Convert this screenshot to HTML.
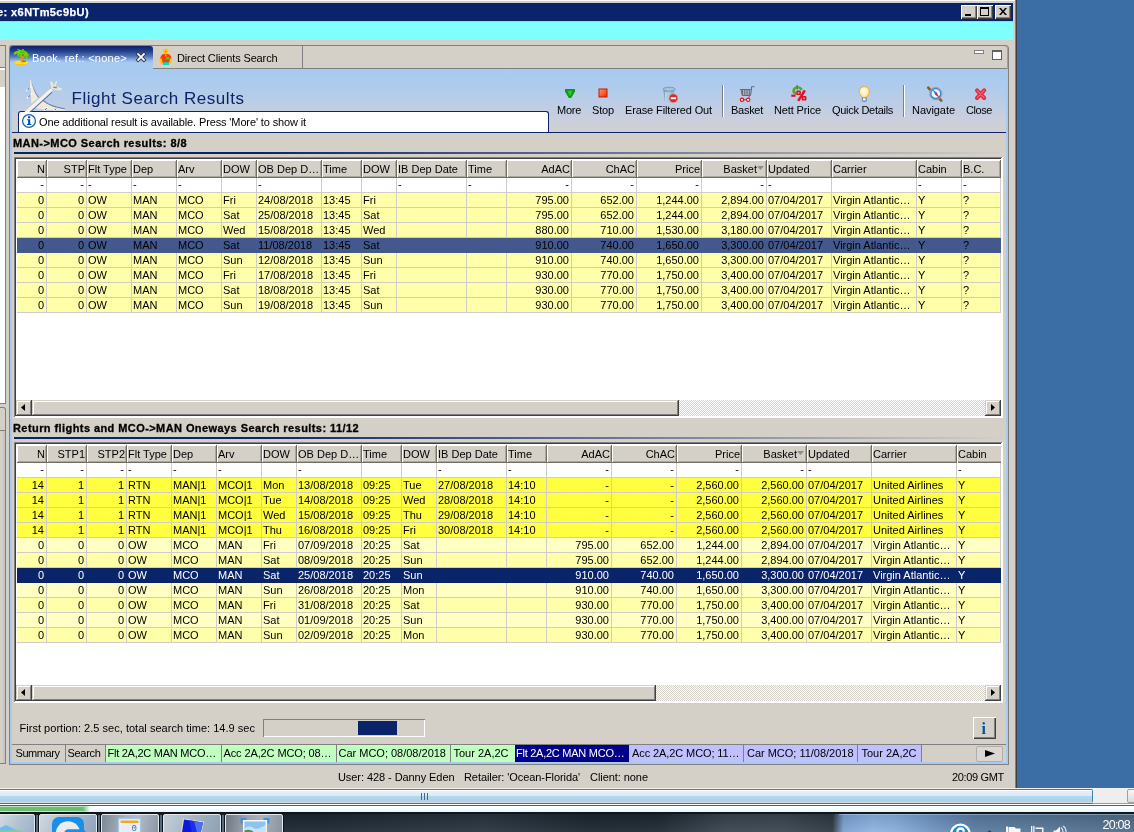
<!DOCTYPE html>
<html><head><meta charset="utf-8"><title>Flight Search Results</title><style>
html,body{margin:0;padding:0}
body{width:1134px;height:832px;overflow:hidden;position:relative;background:#d4d0c8;font-family:"Liberation Sans",sans-serif;font-size:11px;line-height:11px;color:#000}
body{will-change:transform}
body div,body span,body svg{position:absolute;box-sizing:border-box}
.t{white-space:pre}
.up{background:#d4d0c8;box-shadow:inset 1px 1px 0 #fff,inset -1px -1px 0 #404040,inset -2px -2px 0 #808080}
.sb{background:#d4d0c8;box-shadow:inset -1px -1px 0 #404040,inset 1px 1px 0 #d4d0c8,inset -2px -2px 0 #808080,inset 2px 2px 0 #fff}
.hd{background:#d4d0c8;box-shadow:inset -1px -1px 0 #716f64,inset 1px 1px 0 #fff,inset -2px -2px 0 #aca899;line-height:19px;padding:0 2px 0 1px;white-space:pre;overflow:hidden}
.row{left:17px;width:984px;height:14px;line-height:14px}
.row span{top:0;height:14px;padding:0 2px 0 1px;white-space:pre;overflow:hidden}
.r{text-align:right}
.trk{background-color:#fff;background-image:linear-gradient(45deg,#d4d0c8 25%,transparent 25%,transparent 75%,#d4d0c8 75%),linear-gradient(45deg,#d4d0c8 25%,transparent 25%,transparent 75%,#d4d0c8 75%);background-size:2px 2px;background-position:0 0,1px 1px}
</style></head><body>
<div style="left:1017px;top:0px;width:117px;height:788px;background:#3a6ea5;"></div>
<div style="left:0px;top:0px;width:1015px;height:1px;background:#fff;"></div>
<div style="left:1015px;top:0px;width:1px;height:788px;background:#808080;"></div>
<div style="left:1016px;top:0px;width:1px;height:788px;background:#404040;"></div>
<div style="left:0px;top:3px;width:1013px;height:18px;background:#0a246a;"></div>
<span class="t" style="left:-3px;top:6.69px;font-weight:bold;color:#fff;letter-spacing:0.414px;-webkit-text-stroke:.25px #fff;">e: x6NTm5c9bU)</span>
<div class="up" style="left:961px;top:5px;width:16px;height:14px;"></div>
<div class="up" style="left:977px;top:5px;width:16px;height:14px;"></div>
<div class="up" style="left:995px;top:5px;width:16px;height:14px;"></div>
<div style="left:965px;top:14px;width:6px;height:2px;background:#000;"></div>
<div style="left:980px;top:7px;width:9px;height:9px;border:1px solid #000;border-top:2px solid #000;"></div>
<svg style="left:999px;top:8px" width="8" height="7" viewBox="0 0 8 7"><path d="M0 0h2l2 2.5L6 0h2L5 3.5 8 7H6L4 4.5 2 7H0l3-3.5z" fill="#000"/></svg>
<div style="left:0px;top:21px;width:1013px;height:1px;background:#c8c4bc;"></div>
<div style="left:0px;top:22px;width:1013px;height:18px;background:#80ffff;"></div>
<div style="left:0px;top:45px;width:6px;height:359px;background:#808080;"></div>
<div style="left:0px;top:46px;width:5px;height:21px;background:#d4d0c8;"></div>
<div style="left:0px;top:68px;width:5px;height:2px;background:#fff;"></div>
<div style="left:0px;top:70px;width:5px;height:17px;background:#d4d0c8;"></div>
<div style="left:0px;top:87px;width:5px;height:316px;background:#fff;"></div>
<div style="left:0px;top:407px;width:6px;height:357px;background:#808080;border-top-right-radius:3px;"></div>
<div style="left:0px;top:408px;width:5px;height:355px;background:#d4d0c8;border-top-right-radius:2px;"></div>
<div style="left:0px;top:430px;width:5px;height:1px;background:#808080;"></div>
<div style="left:3px;top:431px;width:2px;height:332px;background:#c6c2c6;"></div>
<div style="left:9px;top:45px;width:1000px;height:720px;background:#808080;border-radius:3px 4px 0 0;"></div>
<div style="left:10px;top:46px;width:998px;height:718px;background:#a6caf0;border-radius:3px 3px 0 0;"></div>
<div style="left:12px;top:69px;width:994px;height:693px;background:#d4d0c8;"></div>
<div style="left:153px;top:45px;width:855px;height:24px;background:#d4d0c8;border-top:1px solid #808080;border-right:1px solid #a0a0a0;border-top-right-radius:4px;"></div>
<div style="left:10px;top:46px;width:143px;height:23px;background:linear-gradient(#0a246a 0%,#1f3b85 20%,#5273b8 45%,#8fb3e4 62%,#a6caf0 72%);border-top-left-radius:3px;border-top-right-radius:3px;"></div>
<span class="t" style="left:32px;top:52.69px;color:#fff;letter-spacing:0.249px;">Book. ref.: &lt;none&gt;</span>
<div style="left:153px;top:45px;width:150px;height:24px;background:#d4d0c8;border:1px solid #808080;border-left:none;"></div>
<span class="t" style="left:177px;top:52.69px;letter-spacing:-0.135px;">Direct Clients Search</span>
<div style="left:974px;top:50px;width:10px;height:4px;background:#fff;border:1px solid #808080;"></div>
<div style="left:992px;top:50px;width:10px;height:10px;background:#fff;border:1px solid #606060;border-top:2px solid #606060;"></div>
<div style="left:12px;top:69px;width:994px;height:63px;background:linear-gradient(#a6caf0 0%,#adcbee 25%,#bccde6 55%,#cacfdc 80%,#d2d0d0 100%);"></div>
<div style="left:12px;top:132px;width:994px;height:1px;background:#0a246a;"></div>
<div style="left:303px;top:68px;width:704px;height:1px;background:#808080;"></div>
<span class="t" style="left:71.5px;top:89.61px;font-size:17px;line-height:17px;color:#0a246a;letter-spacing:0.544px;">Flight Search Results</span>
<div style="left:18px;top:111px;width:531px;height:21px;background:#fff;border:1px solid #0a246a;border-bottom:none;border-top-left-radius:3px;border-top-right-radius:3px;"></div>
<span class="t" style="left:39px;top:116.69px;letter-spacing:-0.126px;">One additional result is available. Press 'More' to show it</span>
<span class="t" style="left:557px;top:104.69px;letter-spacing:-0.266px;">More</span>
<span class="t" style="left:592px;top:104.69px;letter-spacing:-0.160px;">Stop</span>
<span class="t" style="left:625px;top:104.69px;letter-spacing:-0.126px;">Erase Filtered Out</span>
<span class="t" style="left:731px;top:104.69px;letter-spacing:-0.273px;">Basket</span>
<span class="t" style="left:774px;top:104.69px;letter-spacing:-0.130px;">Nett Price</span>
<span class="t" style="left:832px;top:104.69px;letter-spacing:-0.292px;">Quick Details</span>
<span class="t" style="left:912px;top:104.69px;letter-spacing:-0.053px;">Navigate</span>
<span class="t" style="left:966px;top:104.69px;letter-spacing:-0.425px;">Close</span>
<div style="left:722px;top:85px;width:1px;height:32px;background:#808080;"></div>
<div style="left:723px;top:85px;width:1px;height:32px;background:#fff;"></div>
<div style="left:903px;top:85px;width:1px;height:32px;background:#808080;"></div>
<div style="left:904px;top:85px;width:1px;height:32px;background:#fff;"></div>
<span class="t" style="left:13px;top:138.19px;font-weight:bold;letter-spacing:0.440px;-webkit-text-stroke:.3px #000;">MAN-&gt;MCO Search results: 8/8</span>
<div style="left:14px;top:152px;width:990px;height:2px;background:linear-gradient(90deg,#0a246a 0%,#0a246a 25%,#d4d0c8 100%);"></div>
<span class="t" style="left:13px;top:423.19px;font-weight:bold;letter-spacing:0.424px;-webkit-text-stroke:.3px #000;">Return flights and MCO-&gt;MAN Oneways Search results: 11/12</span>
<div style="left:14px;top:437px;width:990px;height:2px;background:linear-gradient(90deg,#0a246a 0%,#0a246a 25%,#d4d0c8 100%);"></div>
<div style="left:14px;top:157px;width:989px;height:261px;background:#fff;box-shadow:inset -1px -1px 0 #fff,inset 1px 1px 0 #808080,inset -2px -2px 0 #fff,inset 2px 2px 0 #404040;"></div>
<div class="hd r" style="left:17px;top:160px;width:30px;height:18px">N</div>
<div class="hd r" style="left:47px;top:160px;width:40px;height:18px">STP</div>
<div class="hd" style="left:87px;top:160px;width:45px;height:18px">Flt Type</div>
<div class="hd" style="left:132px;top:160px;width:45px;height:18px">Dep</div>
<div class="hd" style="left:177px;top:160px;width:45px;height:18px">Arv</div>
<div class="hd" style="left:222px;top:160px;width:35px;height:18px">DOW</div>
<div class="hd" style="left:257px;top:160px;width:65px;height:18px">OB Dep D…</div>
<div class="hd" style="left:322px;top:160px;width:40px;height:18px">Time</div>
<div class="hd" style="left:362px;top:160px;width:35px;height:18px">DOW</div>
<div class="hd" style="left:397px;top:160px;width:70px;height:18px">IB Dep Date</div>
<div class="hd" style="left:467px;top:160px;width:40px;height:18px">Time</div>
<div class="hd r" style="left:507px;top:160px;width:65px;height:18px">AdAC</div>
<div class="hd r" style="left:572px;top:160px;width:65px;height:18px">ChAC</div>
<div class="hd r" style="left:637px;top:160px;width:65px;height:18px">Price</div>
<div class="hd r" style="left:702px;top:160px;width:65px;height:18px;padding-right:10px">Basket</div>
<div class="hd" style="left:767px;top:160px;width:65px;height:18px">Updated</div>
<div class="hd" style="left:832px;top:160px;width:85px;height:18px">Carrier</div>
<div class="hd" style="left:917px;top:160px;width:45px;height:18px">Cabin</div>
<div class="hd" style="left:962px;top:160px;width:39px;height:18px">B.C.</div>
<div class="row" style="top:177px;"><span class="r" style="left:0px;width:29px">-</span><span class="r" style="left:30px;width:39px">-</span><span style="left:70px;width:44px">-</span><span style="left:115px;width:44px">-</span><span style="left:160px;width:44px">-</span><span style="left:240px;width:64px">-</span><span style="left:380px;width:69px">-</span><span style="left:450px;width:39px">-</span><span class="r" style="left:490px;width:64px">-</span><span class="r" style="left:555px;width:64px">-</span><span class="r" style="left:620px;width:64px">-</span><span class="r" style="left:685px;width:64px">-</span><span style="left:750px;width:64px">-</span><span style="left:900px;width:44px">-</span><span style="left:945px;width:38px">-</span></div>
<div class="row" style="top:193px;background:#ffffaa;"><span class="r" style="left:0px;width:29px">0</span><span class="r" style="left:30px;width:39px">0</span><span style="left:70px;width:44px">OW</span><span style="left:115px;width:44px">MAN</span><span style="left:160px;width:44px">MCO</span><span style="left:205px;width:34px">Fri</span><span style="left:240px;width:64px">24/08/2018</span><span style="left:305px;width:39px">13:45</span><span style="left:345px;width:34px">Fri</span><span class="r" style="left:490px;width:64px">795.00</span><span class="r" style="left:555px;width:64px">652.00</span><span class="r" style="left:620px;width:64px">1,244.00</span><span class="r" style="left:685px;width:64px">2,894.00</span><span style="left:750px;width:64px">07/04/2017</span><span style="left:815px;width:84px">Virgin Atlantic…</span><span style="left:900px;width:44px">Y</span><span style="left:945px;width:38px">?</span></div>
<div class="row" style="top:208px;background:#ffffaa;"><span class="r" style="left:0px;width:29px">0</span><span class="r" style="left:30px;width:39px">0</span><span style="left:70px;width:44px">OW</span><span style="left:115px;width:44px">MAN</span><span style="left:160px;width:44px">MCO</span><span style="left:205px;width:34px">Sat</span><span style="left:240px;width:64px">25/08/2018</span><span style="left:305px;width:39px">13:45</span><span style="left:345px;width:34px">Sat</span><span class="r" style="left:490px;width:64px">795.00</span><span class="r" style="left:555px;width:64px">652.00</span><span class="r" style="left:620px;width:64px">1,244.00</span><span class="r" style="left:685px;width:64px">2,894.00</span><span style="left:750px;width:64px">07/04/2017</span><span style="left:815px;width:84px">Virgin Atlantic…</span><span style="left:900px;width:44px">Y</span><span style="left:945px;width:38px">?</span></div>
<div class="row" style="top:223px;background:#ffffaa;"><span class="r" style="left:0px;width:29px">0</span><span class="r" style="left:30px;width:39px">0</span><span style="left:70px;width:44px">OW</span><span style="left:115px;width:44px">MAN</span><span style="left:160px;width:44px">MCO</span><span style="left:205px;width:34px">Wed</span><span style="left:240px;width:64px">15/08/2018</span><span style="left:305px;width:39px">13:45</span><span style="left:345px;width:34px">Wed</span><span class="r" style="left:490px;width:64px">880.00</span><span class="r" style="left:555px;width:64px">710.00</span><span class="r" style="left:620px;width:64px">1,530.00</span><span class="r" style="left:685px;width:64px">3,180.00</span><span style="left:750px;width:64px">07/04/2017</span><span style="left:815px;width:84px">Virgin Atlantic…</span><span style="left:900px;width:44px">Y</span><span style="left:945px;width:38px">?</span></div>
<div class="row" style="top:238px;background:#43598d;height:15px;"><span class="r" style="left:0px;width:29px">0</span><span class="r" style="left:30px;width:39px">0</span><span style="left:70px;width:44px">OW</span><span style="left:115px;width:44px">MAN</span><span style="left:160px;width:44px">MCO</span><span style="left:205px;width:34px">Sat</span><span style="left:240px;width:64px">11/08/2018</span><span style="left:305px;width:39px">13:45</span><span style="left:345px;width:34px">Sat</span><span class="r" style="left:490px;width:64px">910.00</span><span class="r" style="left:555px;width:64px">740.00</span><span class="r" style="left:620px;width:64px">1,650.00</span><span class="r" style="left:685px;width:64px">3,300.00</span><span style="left:750px;width:64px">07/04/2017</span><span style="left:815px;width:84px">Virgin Atlantic…</span><span style="left:900px;width:44px">Y</span><span style="left:945px;width:38px">?</span></div>
<div class="row" style="top:253px;background:#ffffaa;"><span class="r" style="left:0px;width:29px">0</span><span class="r" style="left:30px;width:39px">0</span><span style="left:70px;width:44px">OW</span><span style="left:115px;width:44px">MAN</span><span style="left:160px;width:44px">MCO</span><span style="left:205px;width:34px">Sun</span><span style="left:240px;width:64px">12/08/2018</span><span style="left:305px;width:39px">13:45</span><span style="left:345px;width:34px">Sun</span><span class="r" style="left:490px;width:64px">910.00</span><span class="r" style="left:555px;width:64px">740.00</span><span class="r" style="left:620px;width:64px">1,650.00</span><span class="r" style="left:685px;width:64px">3,300.00</span><span style="left:750px;width:64px">07/04/2017</span><span style="left:815px;width:84px">Virgin Atlantic…</span><span style="left:900px;width:44px">Y</span><span style="left:945px;width:38px">?</span></div>
<div class="row" style="top:268px;background:#ffffaa;"><span class="r" style="left:0px;width:29px">0</span><span class="r" style="left:30px;width:39px">0</span><span style="left:70px;width:44px">OW</span><span style="left:115px;width:44px">MAN</span><span style="left:160px;width:44px">MCO</span><span style="left:205px;width:34px">Fri</span><span style="left:240px;width:64px">17/08/2018</span><span style="left:305px;width:39px">13:45</span><span style="left:345px;width:34px">Fri</span><span class="r" style="left:490px;width:64px">930.00</span><span class="r" style="left:555px;width:64px">770.00</span><span class="r" style="left:620px;width:64px">1,750.00</span><span class="r" style="left:685px;width:64px">3,400.00</span><span style="left:750px;width:64px">07/04/2017</span><span style="left:815px;width:84px">Virgin Atlantic…</span><span style="left:900px;width:44px">Y</span><span style="left:945px;width:38px">?</span></div>
<div class="row" style="top:283px;background:#ffffaa;"><span class="r" style="left:0px;width:29px">0</span><span class="r" style="left:30px;width:39px">0</span><span style="left:70px;width:44px">OW</span><span style="left:115px;width:44px">MAN</span><span style="left:160px;width:44px">MCO</span><span style="left:205px;width:34px">Sat</span><span style="left:240px;width:64px">18/08/2018</span><span style="left:305px;width:39px">13:45</span><span style="left:345px;width:34px">Sat</span><span class="r" style="left:490px;width:64px">930.00</span><span class="r" style="left:555px;width:64px">770.00</span><span class="r" style="left:620px;width:64px">1,750.00</span><span class="r" style="left:685px;width:64px">3,400.00</span><span style="left:750px;width:64px">07/04/2017</span><span style="left:815px;width:84px">Virgin Atlantic…</span><span style="left:900px;width:44px">Y</span><span style="left:945px;width:38px">?</span></div>
<div class="row" style="top:298px;background:#ffffaa;"><span class="r" style="left:0px;width:29px">0</span><span class="r" style="left:30px;width:39px">0</span><span style="left:70px;width:44px">OW</span><span style="left:115px;width:44px">MAN</span><span style="left:160px;width:44px">MCO</span><span style="left:205px;width:34px">Sun</span><span style="left:240px;width:64px">19/08/2018</span><span style="left:305px;width:39px">13:45</span><span style="left:345px;width:34px">Sun</span><span class="r" style="left:490px;width:64px">930.00</span><span class="r" style="left:555px;width:64px">770.00</span><span class="r" style="left:620px;width:64px">1,750.00</span><span class="r" style="left:685px;width:64px">3,400.00</span><span style="left:750px;width:64px">07/04/2017</span><span style="left:815px;width:84px">Virgin Atlantic…</span><span style="left:900px;width:44px">Y</span><span style="left:945px;width:38px">?</span></div>
<div style="left:17px;top:192px;width:984px;height:1px;background:#d0ccc8;"></div>
<div style="left:17px;top:207px;width:984px;height:1px;background:#d0ccc8;"></div>
<div style="left:17px;top:222px;width:984px;height:1px;background:#d0ccc8;"></div>
<div style="left:17px;top:237px;width:984px;height:1px;background:#d0ccc8;"></div>
<div style="left:17px;top:267px;width:984px;height:1px;background:#d0ccc8;"></div>
<div style="left:17px;top:282px;width:984px;height:1px;background:#d0ccc8;"></div>
<div style="left:17px;top:297px;width:984px;height:1px;background:#d0ccc8;"></div>
<div style="left:17px;top:312px;width:984px;height:1px;background:#d0ccc8;"></div>
<div style="left:46px;top:178px;width:1px;height:60px;background:#d0ccc8;"></div>
<div style="left:46px;top:253px;width:1px;height:60px;background:#d0ccc8;"></div>
<div style="left:86px;top:178px;width:1px;height:60px;background:#d0ccc8;"></div>
<div style="left:86px;top:253px;width:1px;height:60px;background:#d0ccc8;"></div>
<div style="left:131px;top:178px;width:1px;height:60px;background:#d0ccc8;"></div>
<div style="left:131px;top:253px;width:1px;height:60px;background:#d0ccc8;"></div>
<div style="left:176px;top:178px;width:1px;height:60px;background:#d0ccc8;"></div>
<div style="left:176px;top:253px;width:1px;height:60px;background:#d0ccc8;"></div>
<div style="left:221px;top:178px;width:1px;height:60px;background:#d0ccc8;"></div>
<div style="left:221px;top:253px;width:1px;height:60px;background:#d0ccc8;"></div>
<div style="left:256px;top:178px;width:1px;height:60px;background:#d0ccc8;"></div>
<div style="left:256px;top:253px;width:1px;height:60px;background:#d0ccc8;"></div>
<div style="left:321px;top:178px;width:1px;height:60px;background:#d0ccc8;"></div>
<div style="left:321px;top:253px;width:1px;height:60px;background:#d0ccc8;"></div>
<div style="left:361px;top:178px;width:1px;height:60px;background:#d0ccc8;"></div>
<div style="left:361px;top:253px;width:1px;height:60px;background:#d0ccc8;"></div>
<div style="left:396px;top:178px;width:1px;height:60px;background:#d0ccc8;"></div>
<div style="left:396px;top:253px;width:1px;height:60px;background:#d0ccc8;"></div>
<div style="left:466px;top:178px;width:1px;height:60px;background:#d0ccc8;"></div>
<div style="left:466px;top:253px;width:1px;height:60px;background:#d0ccc8;"></div>
<div style="left:506px;top:178px;width:1px;height:60px;background:#d0ccc8;"></div>
<div style="left:506px;top:253px;width:1px;height:60px;background:#d0ccc8;"></div>
<div style="left:571px;top:178px;width:1px;height:60px;background:#d0ccc8;"></div>
<div style="left:571px;top:253px;width:1px;height:60px;background:#d0ccc8;"></div>
<div style="left:636px;top:178px;width:1px;height:60px;background:#d0ccc8;"></div>
<div style="left:636px;top:253px;width:1px;height:60px;background:#d0ccc8;"></div>
<div style="left:701px;top:178px;width:1px;height:60px;background:#d0ccc8;"></div>
<div style="left:701px;top:253px;width:1px;height:60px;background:#d0ccc8;"></div>
<div style="left:766px;top:178px;width:1px;height:60px;background:#d0ccc8;"></div>
<div style="left:766px;top:253px;width:1px;height:60px;background:#d0ccc8;"></div>
<div style="left:831px;top:178px;width:1px;height:60px;background:#d0ccc8;"></div>
<div style="left:831px;top:253px;width:1px;height:60px;background:#d0ccc8;"></div>
<div style="left:916px;top:178px;width:1px;height:60px;background:#d0ccc8;"></div>
<div style="left:916px;top:253px;width:1px;height:60px;background:#d0ccc8;"></div>
<div style="left:961px;top:178px;width:1px;height:60px;background:#d0ccc8;"></div>
<div style="left:961px;top:253px;width:1px;height:60px;background:#d0ccc8;"></div>
<div style="left:1000px;top:178px;width:1px;height:60px;background:#d0ccc8;"></div>
<div style="left:1000px;top:253px;width:1px;height:60px;background:#d0ccc8;"></div>
<div class="trk" style="left:16px;top:400px;width:985px;height:16px;"></div>
<div class="sb" style="left:16px;top:400px;width:16px;height:16px;"></div>
<div class="sb" style="left:985px;top:400px;width:16px;height:16px;"></div>
<div class="sb" style="left:32px;top:400px;width:647px;height:16px;"></div>
<svg style="left:21px;top:404px" width="4" height="7"><path d="M4 0v7L0 3.500z" fill="#000"/></svg>
<svg style="left:991px;top:404px" width="4" height="7"><path d="M0 0v7l4-3.500z" fill="#000"/></svg>
<div style="left:14px;top:442px;width:989px;height:261px;background:#fff;box-shadow:inset -1px -1px 0 #fff,inset 1px 1px 0 #808080,inset -2px -2px 0 #fff,inset 2px 2px 0 #404040;"></div>
<div class="hd r" style="left:17px;top:445px;width:30px;height:18px">N</div>
<div class="hd r" style="left:47px;top:445px;width:40px;height:18px">STP1</div>
<div class="hd r" style="left:87px;top:445px;width:40px;height:18px">STP2</div>
<div class="hd" style="left:127px;top:445px;width:45px;height:18px">Flt Type</div>
<div class="hd" style="left:172px;top:445px;width:45px;height:18px">Dep</div>
<div class="hd" style="left:217px;top:445px;width:45px;height:18px">Arv</div>
<div class="hd" style="left:262px;top:445px;width:35px;height:18px">DOW</div>
<div class="hd" style="left:297px;top:445px;width:65px;height:18px">OB Dep D…</div>
<div class="hd" style="left:362px;top:445px;width:40px;height:18px">Time</div>
<div class="hd" style="left:402px;top:445px;width:35px;height:18px">DOW</div>
<div class="hd" style="left:437px;top:445px;width:70px;height:18px">IB Dep Date</div>
<div class="hd" style="left:507px;top:445px;width:40px;height:18px">Time</div>
<div class="hd r" style="left:547px;top:445px;width:65px;height:18px">AdAC</div>
<div class="hd r" style="left:612px;top:445px;width:65px;height:18px">ChAC</div>
<div class="hd r" style="left:677px;top:445px;width:65px;height:18px">Price</div>
<div class="hd r" style="left:742px;top:445px;width:65px;height:18px;padding-right:10px">Basket</div>
<div class="hd" style="left:807px;top:445px;width:65px;height:18px">Updated</div>
<div class="hd" style="left:872px;top:445px;width:85px;height:18px">Carrier</div>
<div class="hd" style="left:957px;top:445px;width:44px;height:18px;box-shadow:inset 1px 1px 0 #fff,inset 0 -1px 0 #716f64,inset 0 -2px 0 #aca899">Cabin</div>
<div class="row" style="top:462px;"><span class="r" style="left:0px;width:29px">-</span><span class="r" style="left:30px;width:39px">-</span><span class="r" style="left:70px;width:39px">-</span><span style="left:110px;width:44px">-</span><span style="left:155px;width:44px">-</span><span style="left:200px;width:44px">-</span><span style="left:280px;width:64px">-</span><span style="left:420px;width:69px">-</span><span style="left:490px;width:39px">-</span><span class="r" style="left:530px;width:64px">-</span><span class="r" style="left:595px;width:64px">-</span><span class="r" style="left:660px;width:64px">-</span><span class="r" style="left:725px;width:64px">-</span><span style="left:790px;width:64px">-</span><span style="left:940px;width:43px">-</span></div>
<div class="row" style="top:478px;background:#ffff40;"><span class="r" style="left:0px;width:29px">14</span><span class="r" style="left:30px;width:39px">1</span><span class="r" style="left:70px;width:39px">1</span><span style="left:110px;width:44px">RTN</span><span style="left:155px;width:44px">MAN|1</span><span style="left:200px;width:44px">MCO|1</span><span style="left:245px;width:34px">Mon</span><span style="left:280px;width:64px">13/08/2018</span><span style="left:345px;width:39px">09:25</span><span style="left:385px;width:34px">Tue</span><span style="left:420px;width:69px">27/08/2018</span><span style="left:490px;width:39px">14:10</span><span class="r" style="left:530px;width:64px">-</span><span class="r" style="left:595px;width:64px">-</span><span class="r" style="left:660px;width:64px">2,560.00</span><span class="r" style="left:725px;width:64px">2,560.00</span><span style="left:790px;width:64px">07/04/2017</span><span style="left:855px;width:84px">United Airlines</span><span style="left:940px;width:43px">Y</span></div>
<div class="row" style="top:493px;background:#ffff40;"><span class="r" style="left:0px;width:29px">14</span><span class="r" style="left:30px;width:39px">1</span><span class="r" style="left:70px;width:39px">1</span><span style="left:110px;width:44px">RTN</span><span style="left:155px;width:44px">MAN|1</span><span style="left:200px;width:44px">MCO|1</span><span style="left:245px;width:34px">Tue</span><span style="left:280px;width:64px">14/08/2018</span><span style="left:345px;width:39px">09:25</span><span style="left:385px;width:34px">Wed</span><span style="left:420px;width:69px">28/08/2018</span><span style="left:490px;width:39px">14:10</span><span class="r" style="left:530px;width:64px">-</span><span class="r" style="left:595px;width:64px">-</span><span class="r" style="left:660px;width:64px">2,560.00</span><span class="r" style="left:725px;width:64px">2,560.00</span><span style="left:790px;width:64px">07/04/2017</span><span style="left:855px;width:84px">United Airlines</span><span style="left:940px;width:43px">Y</span></div>
<div class="row" style="top:508px;background:#ffff40;"><span class="r" style="left:0px;width:29px">14</span><span class="r" style="left:30px;width:39px">1</span><span class="r" style="left:70px;width:39px">1</span><span style="left:110px;width:44px">RTN</span><span style="left:155px;width:44px">MAN|1</span><span style="left:200px;width:44px">MCO|1</span><span style="left:245px;width:34px">Wed</span><span style="left:280px;width:64px">15/08/2018</span><span style="left:345px;width:39px">09:25</span><span style="left:385px;width:34px">Thu</span><span style="left:420px;width:69px">29/08/2018</span><span style="left:490px;width:39px">14:10</span><span class="r" style="left:530px;width:64px">-</span><span class="r" style="left:595px;width:64px">-</span><span class="r" style="left:660px;width:64px">2,560.00</span><span class="r" style="left:725px;width:64px">2,560.00</span><span style="left:790px;width:64px">07/04/2017</span><span style="left:855px;width:84px">United Airlines</span><span style="left:940px;width:43px">Y</span></div>
<div class="row" style="top:523px;background:#ffff40;"><span class="r" style="left:0px;width:29px">14</span><span class="r" style="left:30px;width:39px">1</span><span class="r" style="left:70px;width:39px">1</span><span style="left:110px;width:44px">RTN</span><span style="left:155px;width:44px">MAN|1</span><span style="left:200px;width:44px">MCO|1</span><span style="left:245px;width:34px">Thu</span><span style="left:280px;width:64px">16/08/2018</span><span style="left:345px;width:39px">09:25</span><span style="left:385px;width:34px">Fri</span><span style="left:420px;width:69px">30/08/2018</span><span style="left:490px;width:39px">14:10</span><span class="r" style="left:530px;width:64px">-</span><span class="r" style="left:595px;width:64px">-</span><span class="r" style="left:660px;width:64px">2,560.00</span><span class="r" style="left:725px;width:64px">2,560.00</span><span style="left:790px;width:64px">07/04/2017</span><span style="left:855px;width:84px">United Airlines</span><span style="left:940px;width:43px">Y</span></div>
<div class="row" style="top:538px;background:#ffffc4;"><span class="r" style="left:0px;width:29px">0</span><span class="r" style="left:30px;width:39px">0</span><span class="r" style="left:70px;width:39px">0</span><span style="left:110px;width:44px">OW</span><span style="left:155px;width:44px">MCO</span><span style="left:200px;width:44px">MAN</span><span style="left:245px;width:34px">Fri</span><span style="left:280px;width:64px">07/09/2018</span><span style="left:345px;width:39px">20:25</span><span style="left:385px;width:34px">Sat</span><span class="r" style="left:530px;width:64px">795.00</span><span class="r" style="left:595px;width:64px">652.00</span><span class="r" style="left:660px;width:64px">1,244.00</span><span class="r" style="left:725px;width:64px">2,894.00</span><span style="left:790px;width:64px">07/04/2017</span><span style="left:855px;width:84px">Virgin Atlantic…</span><span style="left:940px;width:43px">Y</span></div>
<div class="row" style="top:553px;background:#ffffaa;"><span class="r" style="left:0px;width:29px">0</span><span class="r" style="left:30px;width:39px">0</span><span class="r" style="left:70px;width:39px">0</span><span style="left:110px;width:44px">OW</span><span style="left:155px;width:44px">MCO</span><span style="left:200px;width:44px">MAN</span><span style="left:245px;width:34px">Sat</span><span style="left:280px;width:64px">08/09/2018</span><span style="left:345px;width:39px">20:25</span><span style="left:385px;width:34px">Sun</span><span class="r" style="left:530px;width:64px">795.00</span><span class="r" style="left:595px;width:64px">652.00</span><span class="r" style="left:660px;width:64px">1,244.00</span><span class="r" style="left:725px;width:64px">2,894.00</span><span style="left:790px;width:64px">07/04/2017</span><span style="left:855px;width:84px">Virgin Atlantic…</span><span style="left:940px;width:43px">Y</span></div>
<div class="row" style="top:568px;background:#0a246a;color:#fff;height:15px;"><span class="r" style="left:0px;width:29px">0</span><span class="r" style="left:30px;width:39px">0</span><span class="r" style="left:70px;width:39px">0</span><span style="left:110px;width:44px">OW</span><span style="left:155px;width:44px">MCO</span><span style="left:200px;width:44px">MAN</span><span style="left:245px;width:34px">Sat</span><span style="left:280px;width:64px">25/08/2018</span><span style="left:345px;width:39px">20:25</span><span style="left:385px;width:34px">Sun</span><span class="r" style="left:530px;width:64px">910.00</span><span class="r" style="left:595px;width:64px">740.00</span><span class="r" style="left:660px;width:64px">1,650.00</span><span class="r" style="left:725px;width:64px">3,300.00</span><span style="left:790px;width:64px">07/04/2017</span><span style="left:855px;width:84px">Virgin Atlantic…</span><span style="left:940px;width:43px">Y</span></div>
<div class="row" style="top:583px;background:#ffffc4;"><span class="r" style="left:0px;width:29px">0</span><span class="r" style="left:30px;width:39px">0</span><span class="r" style="left:70px;width:39px">0</span><span style="left:110px;width:44px">OW</span><span style="left:155px;width:44px">MCO</span><span style="left:200px;width:44px">MAN</span><span style="left:245px;width:34px">Sun</span><span style="left:280px;width:64px">26/08/2018</span><span style="left:345px;width:39px">20:25</span><span style="left:385px;width:34px">Mon</span><span class="r" style="left:530px;width:64px">910.00</span><span class="r" style="left:595px;width:64px">740.00</span><span class="r" style="left:660px;width:64px">1,650.00</span><span class="r" style="left:725px;width:64px">3,300.00</span><span style="left:790px;width:64px">07/04/2017</span><span style="left:855px;width:84px">Virgin Atlantic…</span><span style="left:940px;width:43px">Y</span></div>
<div class="row" style="top:598px;background:#ffffaa;"><span class="r" style="left:0px;width:29px">0</span><span class="r" style="left:30px;width:39px">0</span><span class="r" style="left:70px;width:39px">0</span><span style="left:110px;width:44px">OW</span><span style="left:155px;width:44px">MCO</span><span style="left:200px;width:44px">MAN</span><span style="left:245px;width:34px">Fri</span><span style="left:280px;width:64px">31/08/2018</span><span style="left:345px;width:39px">20:25</span><span style="left:385px;width:34px">Sat</span><span class="r" style="left:530px;width:64px">930.00</span><span class="r" style="left:595px;width:64px">770.00</span><span class="r" style="left:660px;width:64px">1,750.00</span><span class="r" style="left:725px;width:64px">3,400.00</span><span style="left:790px;width:64px">07/04/2017</span><span style="left:855px;width:84px">Virgin Atlantic…</span><span style="left:940px;width:43px">Y</span></div>
<div class="row" style="top:613px;background:#ffffc4;"><span class="r" style="left:0px;width:29px">0</span><span class="r" style="left:30px;width:39px">0</span><span class="r" style="left:70px;width:39px">0</span><span style="left:110px;width:44px">OW</span><span style="left:155px;width:44px">MCO</span><span style="left:200px;width:44px">MAN</span><span style="left:245px;width:34px">Sat</span><span style="left:280px;width:64px">01/09/2018</span><span style="left:345px;width:39px">20:25</span><span style="left:385px;width:34px">Sun</span><span class="r" style="left:530px;width:64px">930.00</span><span class="r" style="left:595px;width:64px">770.00</span><span class="r" style="left:660px;width:64px">1,750.00</span><span class="r" style="left:725px;width:64px">3,400.00</span><span style="left:790px;width:64px">07/04/2017</span><span style="left:855px;width:84px">Virgin Atlantic…</span><span style="left:940px;width:43px">Y</span></div>
<div class="row" style="top:628px;background:#ffffaa;"><span class="r" style="left:0px;width:29px">0</span><span class="r" style="left:30px;width:39px">0</span><span class="r" style="left:70px;width:39px">0</span><span style="left:110px;width:44px">OW</span><span style="left:155px;width:44px">MCO</span><span style="left:200px;width:44px">MAN</span><span style="left:245px;width:34px">Sun</span><span style="left:280px;width:64px">02/09/2018</span><span style="left:345px;width:39px">20:25</span><span style="left:385px;width:34px">Mon</span><span class="r" style="left:530px;width:64px">930.00</span><span class="r" style="left:595px;width:64px">770.00</span><span class="r" style="left:660px;width:64px">1,750.00</span><span class="r" style="left:725px;width:64px">3,400.00</span><span style="left:790px;width:64px">07/04/2017</span><span style="left:855px;width:84px">Virgin Atlantic…</span><span style="left:940px;width:43px">Y</span></div>
<div style="left:17px;top:477px;width:984px;height:1px;background:#d0ccc8;"></div>
<div style="left:17px;top:492px;width:984px;height:1px;background:#d0ccc8;"></div>
<div style="left:17px;top:507px;width:984px;height:1px;background:#d0ccc8;"></div>
<div style="left:17px;top:522px;width:984px;height:1px;background:#d0ccc8;"></div>
<div style="left:17px;top:537px;width:984px;height:1px;background:#d0ccc8;"></div>
<div style="left:17px;top:552px;width:984px;height:1px;background:#d0ccc8;"></div>
<div style="left:17px;top:567px;width:984px;height:1px;background:#d0ccc8;"></div>
<div style="left:17px;top:597px;width:984px;height:1px;background:#d0ccc8;"></div>
<div style="left:17px;top:612px;width:984px;height:1px;background:#d0ccc8;"></div>
<div style="left:17px;top:627px;width:984px;height:1px;background:#d0ccc8;"></div>
<div style="left:17px;top:642px;width:984px;height:1px;background:#d0ccc8;"></div>
<div style="left:46px;top:463px;width:1px;height:105px;background:#d0ccc8;"></div>
<div style="left:46px;top:583px;width:1px;height:60px;background:#d0ccc8;"></div>
<div style="left:86px;top:463px;width:1px;height:105px;background:#d0ccc8;"></div>
<div style="left:86px;top:583px;width:1px;height:60px;background:#d0ccc8;"></div>
<div style="left:126px;top:463px;width:1px;height:105px;background:#d0ccc8;"></div>
<div style="left:126px;top:583px;width:1px;height:60px;background:#d0ccc8;"></div>
<div style="left:171px;top:463px;width:1px;height:105px;background:#d0ccc8;"></div>
<div style="left:171px;top:583px;width:1px;height:60px;background:#d0ccc8;"></div>
<div style="left:216px;top:463px;width:1px;height:105px;background:#d0ccc8;"></div>
<div style="left:216px;top:583px;width:1px;height:60px;background:#d0ccc8;"></div>
<div style="left:261px;top:463px;width:1px;height:105px;background:#d0ccc8;"></div>
<div style="left:261px;top:583px;width:1px;height:60px;background:#d0ccc8;"></div>
<div style="left:296px;top:463px;width:1px;height:105px;background:#d0ccc8;"></div>
<div style="left:296px;top:583px;width:1px;height:60px;background:#d0ccc8;"></div>
<div style="left:361px;top:463px;width:1px;height:105px;background:#d0ccc8;"></div>
<div style="left:361px;top:583px;width:1px;height:60px;background:#d0ccc8;"></div>
<div style="left:401px;top:463px;width:1px;height:105px;background:#d0ccc8;"></div>
<div style="left:401px;top:583px;width:1px;height:60px;background:#d0ccc8;"></div>
<div style="left:436px;top:463px;width:1px;height:105px;background:#d0ccc8;"></div>
<div style="left:436px;top:583px;width:1px;height:60px;background:#d0ccc8;"></div>
<div style="left:506px;top:463px;width:1px;height:105px;background:#d0ccc8;"></div>
<div style="left:506px;top:583px;width:1px;height:60px;background:#d0ccc8;"></div>
<div style="left:546px;top:463px;width:1px;height:105px;background:#d0ccc8;"></div>
<div style="left:546px;top:583px;width:1px;height:60px;background:#d0ccc8;"></div>
<div style="left:611px;top:463px;width:1px;height:105px;background:#d0ccc8;"></div>
<div style="left:611px;top:583px;width:1px;height:60px;background:#d0ccc8;"></div>
<div style="left:676px;top:463px;width:1px;height:105px;background:#d0ccc8;"></div>
<div style="left:676px;top:583px;width:1px;height:60px;background:#d0ccc8;"></div>
<div style="left:741px;top:463px;width:1px;height:105px;background:#d0ccc8;"></div>
<div style="left:741px;top:583px;width:1px;height:60px;background:#d0ccc8;"></div>
<div style="left:806px;top:463px;width:1px;height:105px;background:#d0ccc8;"></div>
<div style="left:806px;top:583px;width:1px;height:60px;background:#d0ccc8;"></div>
<div style="left:871px;top:463px;width:1px;height:105px;background:#d0ccc8;"></div>
<div style="left:871px;top:583px;width:1px;height:60px;background:#d0ccc8;"></div>
<div style="left:956px;top:463px;width:1px;height:105px;background:#d0ccc8;"></div>
<div style="left:956px;top:583px;width:1px;height:60px;background:#d0ccc8;"></div>
<div style="left:1000px;top:463px;width:1px;height:105px;background:#d0ccc8;"></div>
<div style="left:1000px;top:583px;width:1px;height:60px;background:#d0ccc8;"></div>
<div class="trk" style="left:16px;top:685px;width:985px;height:16px;"></div>
<div class="sb" style="left:16px;top:685px;width:16px;height:16px;"></div>
<div class="sb" style="left:985px;top:685px;width:16px;height:16px;"></div>
<div class="sb" style="left:32px;top:685px;width:624px;height:16px;"></div>
<svg style="left:21px;top:689px" width="4" height="7"><path d="M4 0v7L0 3.500z" fill="#000"/></svg>
<svg style="left:991px;top:689px" width="4" height="7"><path d="M0 0v7l4-3.500z" fill="#000"/></svg>
<svg style="left:757px;top:166px" width="7" height="4"><path d="M0 0h7L3.500 4z" fill="#8c8c8c"/></svg>
<svg style="left:797px;top:451px" width="7" height="4"><path d="M0 0h7L3.500 4z" fill="#8c8c8c"/></svg>
<span class="t" style="left:19.5px;top:722.69px;letter-spacing:0.026px;">First portion: 2.5 sec, total search time: 14.9 sec</span>
<div style="left:263px;top:719px;width:162px;height:18px;background:#d4d0c8;box-shadow:inset 1px 1px 0 #808080,inset -1px -1px 0 #fff;"></div>
<div style="left:358px;top:721px;width:39px;height:14px;background:#0a246a;"></div>
<div class="up" style="left:973px;top:717px;width:23px;height:22px;"></div>
<span class="t" style="left:981.5px;top:720.76px;font-size:16px;line-height:16px;font-weight:bold;font-family:'Liberation Serif',serif;color:#0054a8;">i</span>
<div style="left:12px;top:744px;width:994px;height:1px;background:#808080;"></div>
<div style="left:12px;top:745px;width:53px;height:17px;background:#d4d0c8;"></div>
<div style="left:65px;top:745px;width:1px;height:17px;background:#808080;"></div>
<span class="t" style="left:15.5px;top:748.19px;letter-spacing:-0.438px;">Summary</span>
<div style="left:66px;top:745px;width:40px;height:17px;background:#d4d0c8;"></div>
<div style="left:105px;top:745px;width:1px;height:17px;background:#808080;"></div>
<span class="t" style="left:67.5px;top:748.19px;letter-spacing:-0.310px;">Search</span>
<div style="left:106px;top:745px;width:116px;height:17px;background:#c0ffc0;"></div>
<div style="left:221px;top:745px;width:1px;height:17px;background:#808080;"></div>
<span class="t" style="left:107.5px;top:748.19px;letter-spacing:-0.254px;">Flt 2A,2C MAN MCO…</span>
<div style="left:222px;top:745px;width:115px;height:17px;background:#c0ffc0;"></div>
<div style="left:336px;top:745px;width:1px;height:17px;background:#808080;"></div>
<span class="t" style="left:223.5px;top:748.19px;letter-spacing:-0.114px;">Acc 2A,2C MCO; 08…</span>
<div style="left:337px;top:745px;width:114px;height:17px;background:#c0ffc0;"></div>
<div style="left:450px;top:745px;width:1px;height:17px;background:#808080;"></div>
<span class="t" style="left:338.5px;top:748.19px;letter-spacing:-0.007px;">Car MCO; 08/08/2018</span>
<div style="left:451px;top:745px;width:64px;height:17px;background:#c0ffc0;"></div>
<span class="t" style="left:453.5px;top:748.19px;letter-spacing:-0.003px;">Tour 2A,2C</span>
<div style="left:515px;top:745px;width:114px;height:17px;background:#00008b;"></div>
<span class="t" style="left:516.0px;top:748.19px;color:#fff;letter-spacing:-0.254px;">Flt 2A,2C MAN MCO…</span>
<div style="left:629px;top:745px;width:115px;height:17px;background:#c0c0ff;"></div>
<div style="left:743px;top:745px;width:1px;height:17px;background:#808080;"></div>
<span class="t" style="left:632.0px;top:748.19px;letter-spacing:-0.095px;">Acc 2A,2C MCO; 11…</span>
<div style="left:744px;top:745px;width:114px;height:17px;background:#c0c0ff;"></div>
<div style="left:857px;top:745px;width:1px;height:17px;background:#808080;"></div>
<span class="t" style="left:747.0px;top:748.19px;letter-spacing:-0.016px;">Car MCO; 11/08/2018</span>
<div style="left:858px;top:745px;width:64px;height:17px;background:#c0c0ff;"></div>
<div style="left:921px;top:745px;width:1px;height:17px;background:#808080;"></div>
<span class="t" style="left:861.5px;top:748.19px;letter-spacing:-0.003px;">Tour 2A,2C</span>
<div style="left:976px;top:746px;width:27px;height:16px;background:#dcd6d2;border:1px solid #b4aca8;border-radius:2px;"></div>
<svg style="left:985px;top:750px" width="10" height="7"><path d="M0 0v7l10-3.5z" fill="#000"/></svg>
<span class="t" style="left:338px;top:771.69px;letter-spacing:-0.069px;">User: 428 - Danny Eden</span>
<span class="t" style="left:464px;top:771.69px;letter-spacing:-0.077px;">Retailer: 'Ocean-Florida'</span>
<span class="t" style="left:590px;top:771.69px;letter-spacing:-0.060px;">Client: none</span>
<span class="t" style="left:952px;top:771.69px;letter-spacing:-0.337px;">20:09 GMT</span>
<div style="left:0px;top:788px;width:1134px;height:1px;background:#f4f1ec;"></div>
<div style="left:0px;top:789px;width:1134px;height:14px;background:#eeeeee;"></div>
<div style="left:-3px;top:789px;width:1096px;height:14px;background:linear-gradient(#ffffff 0,#ffffff 1px,#e6f2fa 1px,#d9e9f5 6px,#b3d9ef 6px,#a9d1ea 12px,#cfe3f0 12px);border:1px solid #3c7fb1;border-top-color:#4a7aa8;border-radius:2px;"></div>
<div style="left:0px;top:802px;width:1093px;height:1px;background:#d6dadf;"></div>
<div style="left:1127px;top:789px;width:10px;height:14px;background:linear-gradient(#f6f6f6,#dcdcdc);border:1px solid #a0a0a0;border-radius:2px;"></div>
<div style="left:421px;top:793px;width:1px;height:7px;background:#3a6a9a;"></div>
<div style="left:424px;top:793px;width:1px;height:7px;background:#3a6a9a;"></div>
<div style="left:427px;top:793px;width:1px;height:7px;background:#3a6a9a;"></div>
<div style="left:0px;top:803px;width:1134px;height:1px;background:#4a7296;"></div>
<div style="left:1093px;top:803px;width:41px;height:1px;background:#9a9a9a;"></div>
<div style="left:0px;top:804px;width:1134px;height:1px;background:#fff;"></div>
<div style="left:0px;top:805px;width:1134px;height:1px;background:#5a5e5a;"></div>
<div style="left:0px;top:806px;width:1134px;height:6px;background:linear-gradient(#ffffff,#f2fcff 60%,#e2f8fb);"></div>
<div style="left:0px;top:806px;width:90px;height:6px;background:linear-gradient(90deg,#6abf6e 0%,#6abf6e 92%,rgba(106,191,110,0) 100%);"></div>
<div style="left:0px;top:806px;width:90px;height:1px;background:linear-gradient(90deg,rgba(255,255,255,.55) 0%,rgba(255,255,255,.55) 90%,rgba(255,255,255,0) 100%);"></div>
<div style="left:0px;top:811px;width:90px;height:1px;background:linear-gradient(90deg,rgba(255,255,255,.6) 0%,rgba(255,255,255,.6) 90%,rgba(255,255,255,0) 100%);"></div>
<div style="left:0px;top:812px;width:1134px;height:2px;background:#10161c;"></div>
<div style="left:0px;top:814px;width:1134px;height:18px;background:linear-gradient(90deg,#18232e 0%,#1b2733 28%,#222e3a 36%,#28343f 43%,#1b2630 52%,#1d2832 58%,#38444f 64%,#3a4651 69%,#2c3842 73.4%,#7da4d4 74.4%,#8cb4e2 77%,#86aedc 79%,#6a8fbc 83%,#5a7ca2 86%,#567596 92%,#506c8a 100%);"></div>
<div style="left:283px;top:814px;width:851px;height:18px;background:linear-gradient(rgba(0,0,0,.12),rgba(255,255,255,.06));"></div>
<div style="left:839px;top:814px;width:295px;height:1px;background:rgba(200,220,240,.45);"></div>
<div style="left:-3px;top:814px;width:38px;height:22px;background:linear-gradient(120deg,#d4dde6 0%,#b4c3d2 50%,#9ab0c8 100%);border:1px solid #e4eaf0;border-radius:2px;box-shadow:0 0 0 1px #0c1218;"></div>
<div style="left:39px;top:814px;width:58px;height:22px;background:linear-gradient(120deg,#d0d9e2 0%,#aebccc 45%,#8ea2ba 100%);border:1px solid #e4eaf0;border-radius:2px;box-shadow:0 0 0 1px #0c1218;"></div>
<div style="left:101px;top:814px;width:58px;height:22px;background:linear-gradient(100deg,#7c8896 0%,#a9b2be 40%,#b4bcc8 60%,#8c97a6 100%);border:1px solid #e4eaf0;border-radius:2px;box-shadow:0 0 0 1px #0c1218;"></div>
<div style="left:163px;top:814px;width:58px;height:22px;background:linear-gradient(110deg,#c4ced8 0%,#a4b4c4 50%,#8ea0b4 100%);border:1px solid #e4eaf0;border-radius:2px;box-shadow:0 0 0 1px #0c1218;"></div>
<div style="left:225px;top:814px;width:58px;height:22px;background:linear-gradient(100deg,#6e7884 0%,#9ba4ae 35%,#aab2bc 60%,#8a949f 100%);border:1px solid #e4eaf0;border-radius:2px;box-shadow:0 0 0 1px #0c1218;"></div>
<div style="left:36px;top:815px;width:2px;height:17px;background:#566a80;"></div>
<div style="left:98px;top:815px;width:2px;height:17px;background:#566a80;"></div>
<div style="left:160px;top:815px;width:2px;height:17px;background:#566a80;"></div>
<div style="left:222px;top:815px;width:2px;height:17px;background:#566a80;"></div>
<svg style="left:0;top:822px" width="34" height="10"><path d="M0 6l6-3 3 1.500 8 4 6 1.500H0z" fill="#6cbaf2"/><path d="M0 8.500h20l2 1.500H0z" fill="#86d466"/></svg>
<svg style="left:50px;top:815px" width="36" height="17"><rect x="2" y="2" width="32" height="30" rx="7" fill="#1a8fe6"/><circle cx="18" cy="18.500" r="12.300" fill="#ececec"/><rect x="14" y="14.200" width="22" height="9" rx="4.500" fill="#1a8fe6"/></svg>
<svg style="left:116px;top:816px" width="28" height="16"><rect x="2.500" y="2.500" width="22" height="16" rx="1" fill="#eef6fc" stroke="#9fc8ea" stroke-width="1.400"/><rect x="4.500" y="4.500" width="18" height="2.500" fill="#f8a322"/><path d="M4.500 7.500h18v9h-18z" fill="#e4eef8"/><text x="15.500" y="14.800" font-family="Liberation Mono, monospace" font-size="9" fill="#4a6a9a">0</text></svg>
<svg style="left:176px;top:815px" width="32" height="17"><path d="M7 3.500l21 3-2.500 11H5z" fill="#e8dcc8"/><path d="M8 4.600l19 2.800-2.300 10H6z" fill="#0a18d8"/><path d="M17 5.900l10 1.500-2.300 10H19z" fill="#4a70f0"/><path d="M13 5.300l5 .7 3 11.500h-5z" fill="#1a30e8"/></svg>
<svg style="left:238px;top:816px" width="34" height="16"><rect x="5" y="4" width="24" height="14" fill="#f4f4f4"/><rect x="6.500" y="5.500" width="21" height="12" fill="#8cc4ee"/><path d="M6.500 13c3-3 6-3 9-1s7 0 12-3v8.500h-21z" fill="#dff0fa" opacity=".7"/><path d="M6.500 14.500c4-1.500 7-.5 9 1.500h-9z" fill="#5a8a5a"/><path d="M3.500 7.500v-4.500h5M25.500 3h5v4.500" stroke="#3f8fd8" stroke-width="1.800" fill="none"/></svg>
<svg style="left:948px;top:822px" width="26" height="10"><circle cx="12.400" cy="11.900" r="9.300" fill="#1787d2" stroke="#fff" stroke-width="2.300"/><path d="M9.400 10.200c0-2.300 1.300-3.700 3.200-3.700 1.900 0 3.200 1.300 3.200 3.300" stroke="#fff" stroke-width="2.300" fill="none"/></svg>
<svg style="left:986px;top:829px" width="7" height="3"><path d="M1.500 3l2-1.800 2 1.800z" fill="#2c3a58"/></svg>
<svg style="left:1004px;top:825px" width="18" height="7"><path d="M2 1.500h2v5.500h-2zM4.500 2h6l1.500 1.500h4.500v3.500h-12z" fill="#f4f6f8"/></svg>
<svg style="left:1028px;top:825px" width="18" height="7"><path d="M3 1h1.300v6h-1.300zM5.200 1h1.300v6h-1.300zM7.500 2.500h8v4.500h-1.500v-3h-6.500z" fill="#f4f6f8"/></svg>
<svg style="left:1052px;top:825px" width="18" height="7"><path d="M1.500 7v-1.500h2.500l4-4v5.500z" fill="#f4f6f8"/><path d="M11 7c0-2-.8-3.500-2-4.500M14 7c0-3-1.200-5-3-6" stroke="#dfe6ee" stroke-width="1.200" fill="none"/></svg>
<span class="t" style="left:1102.5px;top:819.42px;font-size:12.5px;line-height:12.5px;color:#fff;letter-spacing:-0.756px;">20:08</span>
<svg style="left:14px;top:72px" width="60" height="40" viewBox="0 0 60 40"><path d="M16.6 7.6c.8 4 2.5 9 8.8 17.6l-8.2 6.3c.3-8 -.8-16-1.4-23.6z" fill="#f1ead8"/><path d="M17.6 9.5c1 4 3 9.5 7.8 15.7l-1.2.9c-3.6-5-5.6-10.3-6.6-16.6z" fill="#5577b8" opacity=".8"/><path d="M29 27.8c4 4 10 7 22 8.800v1.800c-8 .5-20-.5-31-2.600z" fill="#f1ead8"/><path d="M29.5 28c4 3.600 10 6.500 21.500 8.300v.9c-10-1.200-17-4-22.500-8.400z" fill="#4a6fb5" opacity=".85"/><path d="M10.300 40l25.700-23 2.300.1.100 2.300-22.800 20.600z" fill="#f8f2e2"/><path d="M15.600 40l22.400-20.400.4.800-21.300 19.600z" fill="#4063a8" opacity=".9"/><path d="M36 10l1.800-1 2.200 4.600 2-4.900 1.300.6-1.800 5.500 6.300 1.500-.2 2.200-5-.3-5-1.400z" fill="#ece5d3"/><path d="M39.500 14.500l3.500.8-.3 1.300-3.600-.8z" fill="#8a8778"/><path d="M12.200 19l5-4.500M12.800 26.400l5.500-5M30.300 38.600l3.500-3.600M40.300 38.600l2.600-2.600" stroke="#fff" stroke-width="1.300"/><path d="M13.500 17.800l2.200-2M14.200 25.200l2.300-2.100M31 37.900l1.600-1.700M40.800 38l1.300-1.300" stroke="#333" stroke-width=".9"/></svg>
<svg style="left:12px;top:48px" width="20" height="20" viewBox="0 0 20 20"><path d="M2.200 13.900l3-1.200h8l3 1.200v1.200l-2.200.8v.9h-9.500v-.9l-2.300-.8z" fill="#ffe400"/><path d="M4.500 15.900h9.500v.9h-9.500z" fill="#f0c000"/><path d="M8.300 5.500l1.200-.2.600 2.600 1.200-.1.300 6.600-2.700.2-.1-5z" fill="#f4a810"/><path d="M9.300 7.800l1.400.6M9.400 10l1.700.2M9.400 12.200l1.800.1" stroke="#d05a00" stroke-width=".8"/><path d="M11 13.300l2.800-.1" stroke="#604000" stroke-width=".9"/><path d="M1.100 6.200c1-2.600 3.500-3.700 5.800-3.500l-2.300-1.400c2-.5 3.500.2 4.500 1.200.6-.9 1.800-1.400 3-1.100l-.6 1c1.800.1 3.300 1 4 2.500 1 .8 1.700 2.300 1.500 4.200-.8-.5-1.300-1.200-1.600-2 .2 1.600 0 3-.7 4.200-.9-1-1.200-2.600-1.100-4-.5 1.200-1.200 2-2.200 2.500-.3-1.300-.1-2.600.4-3.700-.9.400-1.800.5-2.700.2-.2 1.400-.1 2.800-.9 3.600-.7-1.100-.7-2.500-.3-3.800-.9.800-1.400 2-1.500 3.400-1.100-.9-1.400-2.600-.8-4.200-1.300.4-2.200 1.100-2.900 2.100-.4-.5-.3-1 0-1.400-.5.100-1 .2-1.600.2z" fill="#72d400"/><path d="M8 4.500c1.500-.8 3.500-.6 5 .5" stroke="#3aa800" stroke-width=".8" fill="none"/></svg>
<svg style="left:135px;top:51px" width="12" height="12" viewBox="0 0 12 12"><path d="M3.100 3.100l5.800 5.800M8.900 3.100l-5.800 5.800" stroke="#2a3650" stroke-width="3.600" stroke-linecap="square"/><path d="M3.100 3.100l5.800 5.800M8.900 3.100l-5.800 5.800" stroke="#fff" stroke-width="1.800" stroke-linecap="square"/></svg>
<svg style="left:157px;top:48px" width="20" height="18" viewBox="0 0 20 18"><circle cx="8.800" cy="2.900" r="2.500" fill="#ffc400"/><ellipse cx="8.800" cy="3.400" rx="1.100" ry=".6" fill="#ff8000"/><path d="M3.800 8.500c.7-2 2.700-2.700 5-2.700s4.400.7 5.200 2.700l.8 3-1.800 1v2.500h-8.200v-2.500l-1.800-1z" fill="#ff3a00"/><path d="M2.600 10.800l2-.6 1.200 5-1.500 1.300c-1.200-1.500-1.800-3.500-1.700-5.700zM15.200 10.800l-2-.6-1.200 5 1.500 1.300c1.200-1.500 1.800-3.500 1.700-5.700z" fill="#ffc800"/><path d="M9 9h3.500v2.500h-3.500z" fill="#20d060"/><path d="M6 14.200h6v2.800h-6z" fill="#00d8d0"/><path d="M8.800 5.800v3" stroke="#ffb000" stroke-width="1.200"/></svg>
<svg style="left:21px;top:113px" width="16" height="16" viewBox="0 0 16 16"><circle cx="8" cy="8" r="6.400" fill="#f8fcff" stroke="#1565b5" stroke-width="1.300"/><path d="M7 3.300h2.200v1.900h-2.200zM6.100 6.300h3.100v4.800h1.100v1h-4.300v-1h1.100v-3.800h-1z" fill="#0052a5"/></svg>
<svg style="left:564px;top:88px" width="12" height="11" viewBox="0 0 12 11"><path d="M1 1h10v2.500l-3.800 6.500h-2.400l-3.800-6.500z" fill="#0b9a10"/><path d="M3.500 2.800h5l-2 5h-1z" fill="#2fc437"/></svg>
<svg style="left:598px;top:88px" width="10" height="10" viewBox="0 0 10 10"><defs><linearGradient id="sg" x1="0" y1="0" x2="1" y2="1"><stop offset="0" stop-color="#ff9a6a"/><stop offset="1" stop-color="#ee2a00"/></linearGradient></defs><rect x="1" y="1" width="8" height="8" fill="url(#sg)" stroke="#c81800" stroke-width="1"/></svg>
<svg style="left:662px;top:86px" width="16" height="17" viewBox="0 0 16 17"><defs><linearGradient id="bg" x1="0" y1="0" x2="1" y2="0"><stop offset="0" stop-color="#6c98bc"/><stop offset=".45" stop-color="#b4d0e4"/><stop offset="1" stop-color="#7aa2c4"/></linearGradient></defs><path d="M1.300 3.200l1.500 12.300h7l2.800-12.300z" fill="url(#bg)"/><ellipse cx="7.200" cy="3.200" rx="6" ry="2" fill="#a4c4dc" stroke="#6c94b8" stroke-width=".9"/><path d="M3.300 6v9.500h1.300v-9z" fill="#d4e4f0"/><circle cx="11.400" cy="12.200" r="4.300" fill="#dc2a2a"/><circle cx="11.400" cy="12.200" r="4.300" fill="none" stroke="#f08080" stroke-width=".6"/><rect x="8.700" y="11.200" width="5.400" height="2" fill="#fff"/></svg>
<svg style="left:739px;top:85px" width="17" height="18" viewBox="0 0 17 18"><path d="M1 4.500h11.500M2 4.500l1.200 6h8.500M12.500 4.500l-1 6M12.500 4.500v-2.800h3M10.800 10.500l-1.500 3" stroke="#6a6a6a" stroke-width="1" fill="none"/><path d="M3.500 4.500v5.500M5.300 4.500v5.500M7.100 4.500v5.500M8.900 4.500v5.500M10.700 4.500v5.500" stroke="#6a6a6a" stroke-width="1"/><circle cx="3" cy="14.800" r="1.700" fill="#fff" stroke="#e81010" stroke-width="1.100"/><circle cx="9.200" cy="14.800" r="1.700" fill="#fff" stroke="#e81010" stroke-width="1.100"/><path d="M4.700 14.800h2.800" stroke="#e81010" stroke-width="1"/></svg>
<svg style="left:790px;top:85px" width="18" height="17" viewBox="0 0 18 17"><path d="M2.300 6c0-2.800 2.500-4.800 5.500-4.800 2.600 0 4.500 1.300 5 3.300l-2.400.7c-.4-1.100-1.400-1.700-2.700-1.700-1.500 0-2.600.9-2.600 2.200 0 1.100.8 1.700 2.200 2.200l-.9 2.200c-2.500-.7-4.100-2-4.100-4.100z" fill="#5aa42a"/><path d="M7.200 0v4.500" stroke="#4c9422" stroke-width="1.600"/><path d="M1.300 9.600h4.200v2.200h-4.200z" fill="#e60f1e"/><rect x="6.300" y="5.600" width="4.600" height="4.400" rx="1.200" fill="#e60f1e"/><rect x="7.800" y="7" width="1.500" height="1.600" fill="#f7a0a0"/><rect x="11.600" y="11" width="4.800" height="4.600" rx="1.200" fill="#e60f1e"/><rect x="13.200" y="12.500" width="1.500" height="1.600" fill="#f7a0a0"/><path d="M14.800 5.300l-6.600 10.500" stroke="#e60f1e" stroke-width="2.500"/></svg>
<svg style="left:857px;top:85px" width="15" height="18" viewBox="0 0 15 18"><defs><radialGradient id="bl" cx=".45" cy=".4" r=".6"><stop offset="0" stop-color="#fffdf0"/><stop offset=".7" stop-color="#ffeeb0"/><stop offset="1" stop-color="#ffd878"/></radialGradient></defs><path d="M7.300 1.600c3 0 5 2.200 5 4.900 0 1.800-.9 2.900-1.700 3.900-.6.700-.8 1.400-.8 2.200h-5c0-.8-.2-1.500-.8-2.200-.8-1-1.700-2.100-1.700-3.900 0-2.700 2-4.900 5-4.900z" fill="url(#bl)" stroke="#f3a82a" stroke-width="1"/><path d="M4.900 12.600h4.900v3.200l-1.200 1.200h-2.500l-1.200-1.200z" fill="#6f8fb0"/><path d="M6 13.200h2.600v2.300h-2.600z" fill="#f4f8fc"/></svg>
<svg style="left:926px;top:85px" width="18" height="18" viewBox="0 0 18 18"><path d="M2.200 2.600l2.200 2.200M15.300 15.600l-2.200-2.200" stroke="#8a5a20" stroke-width="2.600" stroke-linecap="round"/><circle cx="9.800" cy="8.600" r="6.200" fill="#f2f8fd" stroke="#8d99a6" stroke-width=".9"/><circle cx="9.800" cy="8.600" r="5" fill="none" stroke="#3b8ad0" stroke-width="1.500"/><path d="M6.200 4.300l5.100 3.600-1.900 1.900z" fill="#2a78d0"/><path d="M13.600 13l-4.700-3.400 1.900-1.900z" fill="#e82020"/></svg>
<svg style="left:973px;top:87px" width="15" height="15" viewBox="0 0 15 15"><path d="M4 3.400l7.200 7.600M11.200 3.400l-7.200 7.600" stroke="#e0283c" stroke-width="4" stroke-linecap="round"/><path d="M4.200 3.500l6.800 7.200M11 3.500l-6.800 7.200" stroke="#f25a6c" stroke-width="1.600" stroke-linecap="round"/></svg>
</body></html>
